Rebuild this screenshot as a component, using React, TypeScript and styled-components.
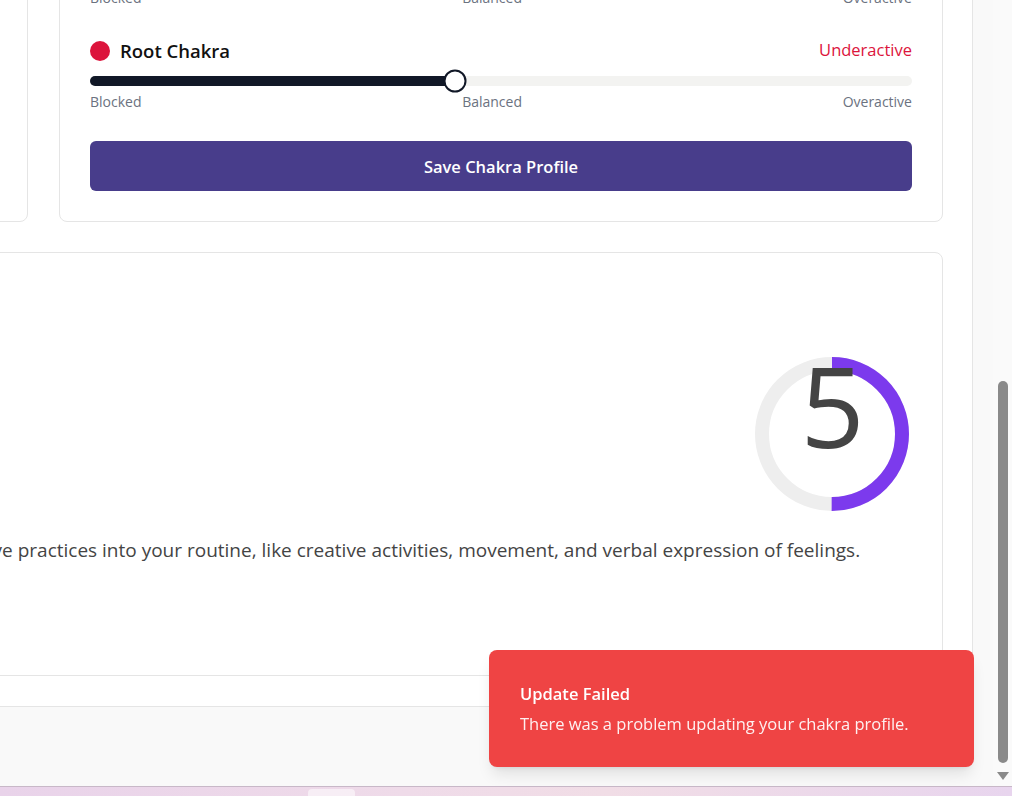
import React from "react";
import styled, { createGlobalStyle } from "styled-components";

const FONT = `"Open Sans", "Noto Sans", "Liberation Sans", sans-serif`;

const PREFIX_W = 190;
const LEFT_SHIFT = PREFIX_W + 61;

const GlobalStyle = createGlobalStyle`
  html, body { margin: 0; padding: 0; height: 100%; overflow: hidden; background: #f9f9f9; }
  body { font-family: ${FONT}; color: #111827; }
  * { box-sizing: border-box; }
`;

const Screen = styled.div`
  width: 1012px;
  height: 796px;
  display: flex;
  flex-direction: column;
  overflow: hidden;
`;

const BrowserWindow = styled.div`
  height: 786px;
  display: flex;
  background: #f9f9f9;
`;

const Viewport = styled.div`
  flex: 1;
  overflow: hidden;
`;

const Main = styled.main`
  width: ${973 + LEFT_SHIFT}px;
  margin-left: -${LEFT_SHIFT}px;
  margin-top: -706px;
  background: #fff;
  border-right: 1px solid #e5e5e5;
  border-bottom: 1px solid #e5e5e5;
  padding: 30px 29px 30px 30px;
  display: flex;
  flex-direction: column;
  gap: 30px;
`;

const TopGrid = styled.div`
  display: grid;
  grid-template-columns: 1fr 884px;
  gap: 31px;
`;

const Card = styled.section`
  background: #fff;
  border: 1px solid #e5e5e5;
  border-radius: 8px;
  padding: 30px;
  display: flex;
  flex-direction: column;
  gap: 30px;
  min-width: 0;
`;

const CardTitle = styled.h2`
  margin: 0;
  font-size: 20px;
  line-height: 28px;
  font-weight: 600;
  color: #111827;
`;

const SummaryText = styled.p`
  margin: 0;
  font-size: 14px;
  line-height: 20px;
  color: #6b7280;
`;

const ChakraRow = styled.div`
  display: flex;
  flex-direction: column;
`;

const RowHeader = styled.div`
  height: 28px;
  display: flex;
  align-items: center;
  justify-content: space-between;
`;

const NameGroup = styled.div`
  display: flex;
  align-items: center;
  gap: 10px;
`;

const Dot = styled.span<{ $color: string }>`
  width: 20px;
  height: 20px;
  border-radius: 50%;
  background: ${(p) => p.$color};
`;

const ChakraName = styled.span`
  font-size: 18.5px;
  line-height: 28px;
  font-weight: 600;
  color: #111;
`;

const Status = styled.span<{ $color: string }>`
  font-size: 16.5px;
  line-height: 26px;
  align-self: flex-start;
  color: ${(p) => p.$color};
`;

const SliderArea = styled.div`
  margin-top: 5px;
  height: 22px;
  display: flex;
  align-items: center;
`;

const Track = styled.div`
  position: relative;
  width: 100%;
  height: 10px;
  border-radius: 5px;
  background: #f3f3f1;
`;

const Fill = styled.div`
  height: 100%;
  border-radius: 5px;
  background: #111827;
`;

const Thumb = styled.div`
  position: absolute;
  top: 50%;
  width: 23px;
  height: 23px;
  border-radius: 50%;
  background: #fff;
  border: 2px solid #111827;
  transform: translate(-50%, -50%);
`;

const ScaleLabels = styled.div`
  display: flex;
  justify-content: space-between;
  font-size: 14px;
  line-height: 19px;
  color: #6b7280;
`;

const SaveButton = styled.button`
  height: 50px;
  border: none;
  border-radius: 6px;
  background: #483d8b;
  color: #fff;
  font-family: ${FONT};
  font-size: 16.5px;
  font-weight: 600;
  cursor: pointer;
`;

const BigCard = styled.section`
  background: #fff;
  border: 1px solid #e5e5e5;
  border-radius: 8px;
  padding: 30px;
  display: flex;
  flex-direction: column;
`;

const BigTitle = styled.h2`
  margin: 0;
  font-size: 20px;
  line-height: 32px;
  font-weight: 600;
`;

const ScoreRow = styled.div`
  margin-top: 39px;
  display: flex;
  justify-content: flex-end;
`;

const Gauge = styled.div`
  position: relative;
  width: 160px;
  height: 160px;
`;

const ScoreNumber = styled.div`
  position: absolute;
  top: -5px;
  left: 0;
  right: 0;
  padding-left: 1px;
  text-align: center;
  font-size: 112px;
  line-height: 1;
  color: #444;
`;

const Insight = styled.p`
  margin: 23px 0 81px;
  font-size: 19px;
  line-height: 27px;
  color: #444;
  white-space: nowrap;
`;

const ScrollGutter = styled.div`
  width: 19px;
  flex: none;
  display: flex;
  flex-direction: column;
  align-items: flex-start;
  background: #fafafa;
`;

const ScrollThumb = styled.div`
  margin: 381px 0 0 5px;
  width: 10px;
  height: 382px;
  border-radius: 5px;
  background: #8a8a8a;
`;

const ScrollArrow = styled.div`
  margin: 9px 0 0 4px;
  width: 0;
  height: 0;
  border-left: 6px solid transparent;
  border-right: 6px solid transparent;
  border-top: 8px solid #8a8a8a;
`;

const Desktop = styled.div`
  height: 10px;
  border-top: 1px solid #c8b8c8;
  background: linear-gradient(90deg, #e9d3ea 0%, #efdbe9 40%, #f1dde6 60%, #e8d5ee 100%);
  display: flex;
  padding-left: 308px;
`;

const TaskItem = styled.div`
  margin-top: 2px;
  width: 47px;
  height: 8px;
  border-radius: 4px 4px 0 0;
  background: rgba(255, 255, 255, 0.55);
`;

const Toast = styled.div`
  position: fixed;
  right: 38px;
  bottom: 29px;
  width: 485px;
  padding: 32px 31px 31px;
  background: #ef4444;
  border-radius: 8px;
  box-shadow: 0 10px 15px -3px rgba(0, 0, 0, 0.1), 0 4px 6px -4px rgba(0, 0, 0, 0.1);
  color: #fff;
`;

const ToastTitle = styled.div`
  font-size: 16.5px;
  line-height: 24px;
  font-weight: 600;
`;

const ToastMessage = styled.div`
  margin-top: 6px;
  font-size: 16.5px;
  line-height: 24px;
  color: rgba(255, 255, 255, 0.92);
`;

type Chakra = { name: string; color: string; value: number; status: string; statusColor: string };

const chakras: Chakra[] = [
  { name: "Crown Chakra", color: "#8a2be2", value: 6, status: "Balanced", statusColor: "#16a34a" },
  { name: "Third Eye Chakra", color: "#4b0082", value: 5, status: "Balanced", statusColor: "#16a34a" },
  { name: "Throat Chakra", color: "#1e90ff", value: 3, status: "Underactive", statusColor: "#1e90ff" },
  { name: "Heart Chakra", color: "#32cd32", value: 6, status: "Balanced", statusColor: "#16a34a" },
  { name: "Solar Plexus Chakra", color: "#ffd700", value: 5, status: "Balanced", statusColor: "#16a34a" },
  { name: "Sacral Chakra", color: "#ff8c00", value: 4, status: "Underactive", statusColor: "#ff8c00" },
  { name: "Root Chakra", color: "#dc143c", value: 5, status: "Underactive", statusColor: "#dc143c" },
];

const MIN = 1;
const MAX = 10;

function ChakraSlider({ chakra }: { chakra: Chakra }) {
  const pct = ((chakra.value - MIN) / (MAX - MIN)) * 100;
  return (
    <ChakraRow>
      <RowHeader>
        <NameGroup>
          <Dot $color={chakra.color} />
          <ChakraName>{chakra.name}</ChakraName>
        </NameGroup>
        <Status $color={chakra.statusColor}>{chakra.status}</Status>
      </RowHeader>
      <SliderArea>
        <Track>
          <Fill style={{ width: `${pct}%` }} />
          <Thumb style={{ left: `${pct}%` }} />
        </Track>
      </SliderArea>
      <ScaleLabels>
        <span>Blocked</span>
        <span>Balanced</span>
        <span>Overactive</span>
      </ScaleLabels>
    </ChakraRow>
  );
}

function ScoreGauge({ score }: { score: number }) {
  const r = 70;
  const c = 2 * Math.PI * r;
  const frac = score / 10;
  return (
    <Gauge>
      <svg width="160" height="160" viewBox="0 0 160 160">
        <circle cx="80" cy="80" r={r} fill="none" stroke="#eeeeee" strokeWidth="14" />
        <circle
          cx="80"
          cy="80"
          r={r}
          fill="none"
          stroke="#7c3aed"
          strokeWidth="14"
          strokeDasharray={`${c * frac} ${c}`}
          transform="rotate(-90 80 80)"
        />
      </svg>
      <ScoreNumber>{score}</ScoreNumber>
    </Gauge>
  );
}

export default function App() {
  return (
    <>
      <GlobalStyle />
      <Screen>
        <BrowserWindow>
          <Viewport>
            <Main>
              <TopGrid>
                <Card>
                  <CardTitle>Summary</CardTitle>
                  <SummaryText>Adjust each chakra to reflect how you feel today.</SummaryText>
                </Card>
                <Card>
                  <CardTitle>Chakra Balance</CardTitle>
                  {chakras.map((c) => (
                    <ChakraSlider key={c.name} chakra={c} />
                  ))}
                  <SaveButton>Save Chakra Profile</SaveButton>
                </Card>
              </TopGrid>
              <BigCard>
                <BigTitle>Insights</BigTitle>
                <ScoreRow>
                  <ScoreGauge score={5} />
                </ScoreRow>
                <Insight>
                  Incorporate expressive practices into your routine, like creative activities, movement, and verbal expression of feelings.
                </Insight>
              </BigCard>
            </Main>
          </Viewport>
          <ScrollGutter>
            <ScrollThumb />
            <ScrollArrow />
          </ScrollGutter>
        </BrowserWindow>
        <Desktop>
          <TaskItem />
        </Desktop>
      </Screen>
      <Toast>
        <ToastTitle>Update Failed</ToastTitle>
        <ToastMessage>There was a problem updating your chakra profile.</ToastMessage>
      </Toast>
    </>
  );
}
